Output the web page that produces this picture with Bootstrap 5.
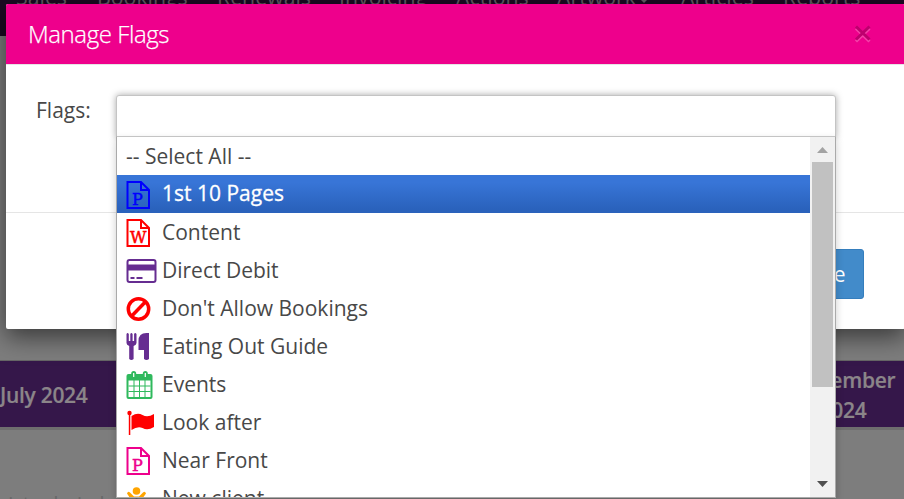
<!DOCTYPE html>
<html lang="en">
<head>
<meta charset="utf-8">
<meta name="viewport" content="width=device-width, initial-scale=1">
<title>Manage Flags</title>
<link href="https://cdn.jsdelivr.net/npm/bootstrap@5.3.0/dist/css/bootstrap.min.css" rel="stylesheet">
<style>
body{font-family:"Open Sans",sans-serif;font-size:21px;line-height:30px;color:#484848;background:#7d7d7d;height:499px;overflow:hidden}
.page{height:499px}
.topnav{height:36px;background:#1a0a22;color:#625c65;font-size:21.3px;white-space:nowrap}
.topnav span{position:absolute;top:-18px;line-height:30px}
.topnav .caret{top:-1px;border:4px solid transparent;border-top-color:#625c65;border-bottom:0}
.filler{height:324px}
.months{height:67px;background:#35174a;color:#8b8589;font-weight:600;letter-spacing:-.3px;padding-top:1px;border-top:1px solid #666;box-shadow:0 3px 0 #6e6e6e;-webkit-text-stroke:.2px #8b8589}
.months .first{width:116px}
.months .last{width:122px}
.under{color:#686868;font-size:20px;padding-top:62px;line-height:30px;white-space:nowrap}
.dialog{left:6px;top:4px;width:899px;height:325px;box-shadow:0 8px 24px rgba(0,0,0,.55);border-radius:2px;z-index:2}
.dialog-head{height:60px;background:#ee008c;color:#fff;padding:0 32px 0 22px;font-weight:300;font-size:24px;border-radius:2px 2px 0 0}
.ttl{letter-spacing:-.42px;-webkit-text-stroke:.25px #fff}
.dialog-body{height:148px;border-top:1px solid #e5e5e5;padding:30px 0 0 30px}
.lab{width:80px;flex:none}
.dialog-foot{border-top:1px solid #e5e5e5;padding:36px 41px 0 0}
.save{height:50px;width:83px;background:#428bca;border:1px solid #357ebd;border-radius:3px;color:#fff;font-size:21px;padding:0 18px}
.picker{width:720px;height:43px;background:#fff;border:1px solid #c4c4c4;border-radius:3px 3px 0 0;box-shadow:0 0 7px rgba(0,0,0,.35)}
.menu{left:116px;top:136px;width:720px;height:362px;background:#fff;border:1px solid #aaa;border-top-color:#c4c4c4;box-shadow:0 4px 8px rgba(0,0,0,.2);z-index:3}
.opt{height:38px;padding-left:9px;white-space:nowrap}
.opt svg{width:36px;height:30px;flex:none;overflow:visible}
.opt.on{background:linear-gradient(#3875d7 20%,#2a62bc 90%);color:#fff}
.opt.on span{-webkit-text-stroke:.3px #fff;position:relative;top:-1px}
.sbar{width:25px;background:#f1f1f1}
.thumb{width:21px;height:225px;background:#c1c1c1}
svg text{font-family:"DejaVu Serif",serif;font-size:16px;stroke-width:.5}
</style>
<script src="https://cdn.jsdelivr.net/npm/bootstrap@5.3.0/dist/js/bootstrap.bundle.min.js"></script>
</head>
<body>
<div class="page position-relative overflow-hidden">
  <nav class="topnav position-relative">
    <span style="left:16px">Sales</span><span style="left:97px">Bookings</span><span style="left:217px">Renewals</span><span style="left:339px">Invoicing</span><span style="left:456px">Actions</span><span style="left:557px">Artwork</span><span class="caret" style="left:640px"></span><span style="left:681px">Articles</span><span style="left:783px">Reports</span>
  </nav>
  <div class="filler"></div>
  <div class="months d-flex justify-content-between align-items-center">
    <div class="first">July 2024</div>
    <div class="last d-flex flex-column align-items-center"><span>November</span><span>2024</span></div>
  </div>
  <div class="under">rist admin lead</div>

  <div class="dialog position-absolute bg-white">
    <div class="dialog-head d-flex justify-content-between align-items-center">
      <span class="ttl">Manage Flags</span>
      <svg width="20" height="20" viewBox="0 0 20 20" fill="none" stroke-width="3"><path d="M3 4.500l13.500 13M16.500 4.500l-13.500 13" stroke="#f540a9"/><path d="M3 2.500l13.500 13M16.500 2.500l-13.500 13" stroke="#bd006e"/></svg>
    </div>
    <div class="dialog-body d-flex align-items-start">
      <label class="lab">Flags:</label>
      <div class="picker"></div>
    </div>
    <div class="dialog-foot d-flex justify-content-end"><button class="save text-end">Save</button></div>
  </div>

  <div class="menu position-absolute d-flex">
    <div class="flex-grow-1 overflow-hidden">
      <div class="opt d-flex align-items-center"><span>-- Select All --</span></div>
      <div class="opt on d-flex align-items-center"><svg viewBox="0 0 36 30" fill="none" stroke="#00f" stroke-width="2"><path d="M1.500 3h13.500l8 8v18H1.500zM15 3v8h8"/><text x="6" y="26" fill="#00f">P</text></svg><span>1st 10 Pages</span></div>
      <div class="opt d-flex align-items-center"><svg viewBox="0 0 36 30" fill="none" stroke="red" stroke-width="2"><path d="M1.500 3h13.500l8 8v18H1.500zM15 3v8h8"/><text x="4" y="26" fill="red">W</text></svg><span>Content</span></div>
      <div class="opt d-flex align-items-center"><svg viewBox="0 0 36 30" fill="none" stroke="#662d91" stroke-width="2"><rect x="1.500" y="5" width="28" height="22" rx="2"/><path d="M1 12.500h28.500" stroke-width="6"/><path d="M4.500 23h4M10.500 23h6"/></svg><span>Direct Debit</span></div>
      <div class="opt d-flex align-items-center"><svg viewBox="0 0 36 30" fill="none" stroke="red" stroke-width="3.500"><circle cx="12.500" cy="16" r="10.200"/><path d="M5.500 23.200l14-14.400"/></svg><span>Don't Allow Bookings</span></div>
      <div class="opt d-flex align-items-center"><svg viewBox="0 0 36 30" fill="#662d91"><path d="M.5 3q1-2 2.300 0v7h1.500V3q1-2 2.300 0v7h1.500V3q1-2 2.400 0v9q0 2-2.900 3v13q-2.200 2-4.400 0V15Q.5 14 .5 12zM12.500 10q0-8 8-8h2.500v26q-2.500 2-5 0v-9h-5.500z"/></svg><span>Eating Out Guide</span></div>
      <div class="opt d-flex align-items-center"><svg viewBox="0 0 36 30"><rect x=".5" y="5" width="26" height="25" rx="2" fill="#2fb95d"/><path d="M2.500 11.500h22V28h-22z" fill="#fff"/><path d="M8 11v17M13.500 11v17M19 11v17M2.500 17h22M2.500 22.500h22" stroke="#2fb95d"/><path d="M7.700 4.500v3M19.300 4.500v3" stroke="#2fb95d" stroke-width="5" stroke-linecap="round"/><path d="M7.700 4v4M19.300 4v4" stroke="#fff" stroke-width="1.200"/></svg><span>Events</span></div>
      <div class="opt d-flex align-items-center"><svg viewBox="0 0 36 30" fill="red"><circle cx="3.500" cy="6" r="2.200"/><path d="M2.800 6h1.500v22H2.800zM5.500 9q6-4 11-1 5 3 11.500-1v13q-6.500 4-11.500 1-5-2-11 2z"/></svg><span>Look after</span></div>
      <div class="opt d-flex align-items-center"><svg viewBox="0 0 36 30" fill="none" stroke="#ee008c" stroke-width="2"><path d="M1.500 3h13.500l8 8v18H1.500zM15 3v8h8"/><text x="6" y="26" fill="#ee008c">P</text></svg><span>Near Front</span></div>
      <div class="opt d-flex align-items-center"><svg viewBox="0 0 36 30" fill="#ffa500"><circle cx="10.500" cy="8" r="3.800"/><path d="M1 10.500q1-3 3-1l4 4h5l4-4q2-2 3 1l-5 7v10H6V18z"/></svg><span>New client</span></div>
    </div>
    <div class="sbar d-flex flex-column align-items-center justify-content-between">
      <svg width="25" height="25"><path d="M7 16l5.500-6 5.500 6z" fill="#a3a3a3"/></svg>
      <div class="thumb mb-auto"></div>
      <svg width="25" height="25"><path d="M7 9l5.500 6 5.500-6z" fill="#505050"/></svg>
    </div>
  </div>
</div>
</body>
</html>
